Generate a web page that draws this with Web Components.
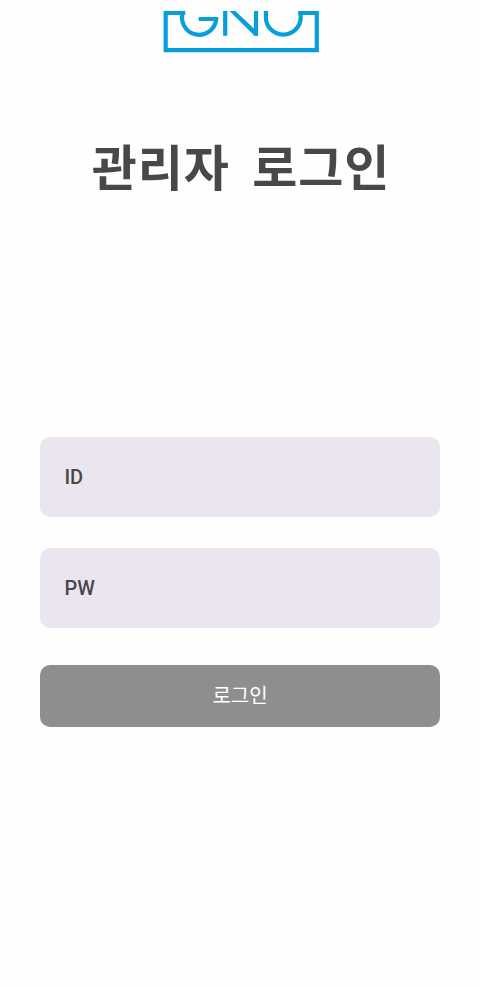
<!DOCTYPE html>
<html lang="ko">
<head>
<meta charset="utf-8">
<title>관리자 로그인</title>
<style>
body { margin: 0; background: #fefefe; color: #484848; font-family: Roboto, "Noto Sans CJK KR", sans-serif; }
</style>
</head>
<body>
<login-page>
  <gnu-logo slot="logo"></gnu-logo>
  <page-title slot="title">관리자 로그인</page-title>
  <text-field>ID</text-field>
  <text-field>PW</text-field>
  <submit-button>로그인</submit-button>
</login-page>
<script>
function define(name, html) {
  const template = document.createElement('template');
  template.innerHTML = html;
  customElements.define(name, class extends HTMLElement {
    constructor() {
      super();
      this.attachShadow({ mode: 'open' }).append(template.content.cloneNode(true));
    }
  });
}
define('gnu-logo', `
<style>:host { display: block; height: 42px; padding-left: 2px; } svg { display: block; }</style>
<svg width="156" height="42" viewBox="163 11 156 42" fill="none" stroke="#069fdb" stroke-width="4.2">
  <path d="M185.2 13H165.7V50.1H316.8V13H298.3"/>
  <path d="M183.400 11A17.100 17.100 0 1 0 216.200 19H198.700"/>
  <path d="M225.200 11V35.800M256 11V35.800"/>
  <path fill="#069fdb" stroke="none" d="M229.500 11H235.300L258 32.300V35.800H254.500Z"/>
  <path d="M265.900 11V17.200A17.400 17.400 0 0 0 300.700 17.200V11"/>
</svg>`);
define('page-title', `
<style>
:host { display: block; }
h1 { margin: 0; padding-left: 2px; font: 700 49px/74px "Noto Sans CJK KR", sans-serif; word-spacing: 7.8px; letter-spacing: .9px; white-space: nowrap; }
</style><h1><slot></slot></h1>`);
define('text-field', `
<style>
:host { display: flex; align-items: center; box-sizing: border-box; height: 80px; padding: 0 24.4px; border-radius: 10px; background: #ebe5ef; font-size: 20px; font-weight: 500; line-height: 24px; }
</style><span><slot></slot></span>`);
define('submit-button', `
<style>
:host { display: block; margin-top: 6.4px; }
button { display: block; width: 100%; height: 61.600px; padding: 0 0 2px; border: 0; border-radius: 10px; background: #8e8e8e; color: #fff; font: 400 20px/30px "Noto Sans CJK KR", sans-serif; }
</style><button type="button"><slot></slot></button>`);
define('login-page', `
<style>
:host { display: flex; flex-direction: column; box-sizing: border-box; height: 987px; padding: 11px 40px 0; }
header { display: flex; flex-direction: column; align-items: center; height: 425.700px; gap: 75px; }
form { display: flex; flex-direction: column; gap: 31px; }
</style>
<header><slot name="logo"></slot><slot name="title"></slot></header>
<form><slot></slot></form>`);
</script>
</body>
</html>
